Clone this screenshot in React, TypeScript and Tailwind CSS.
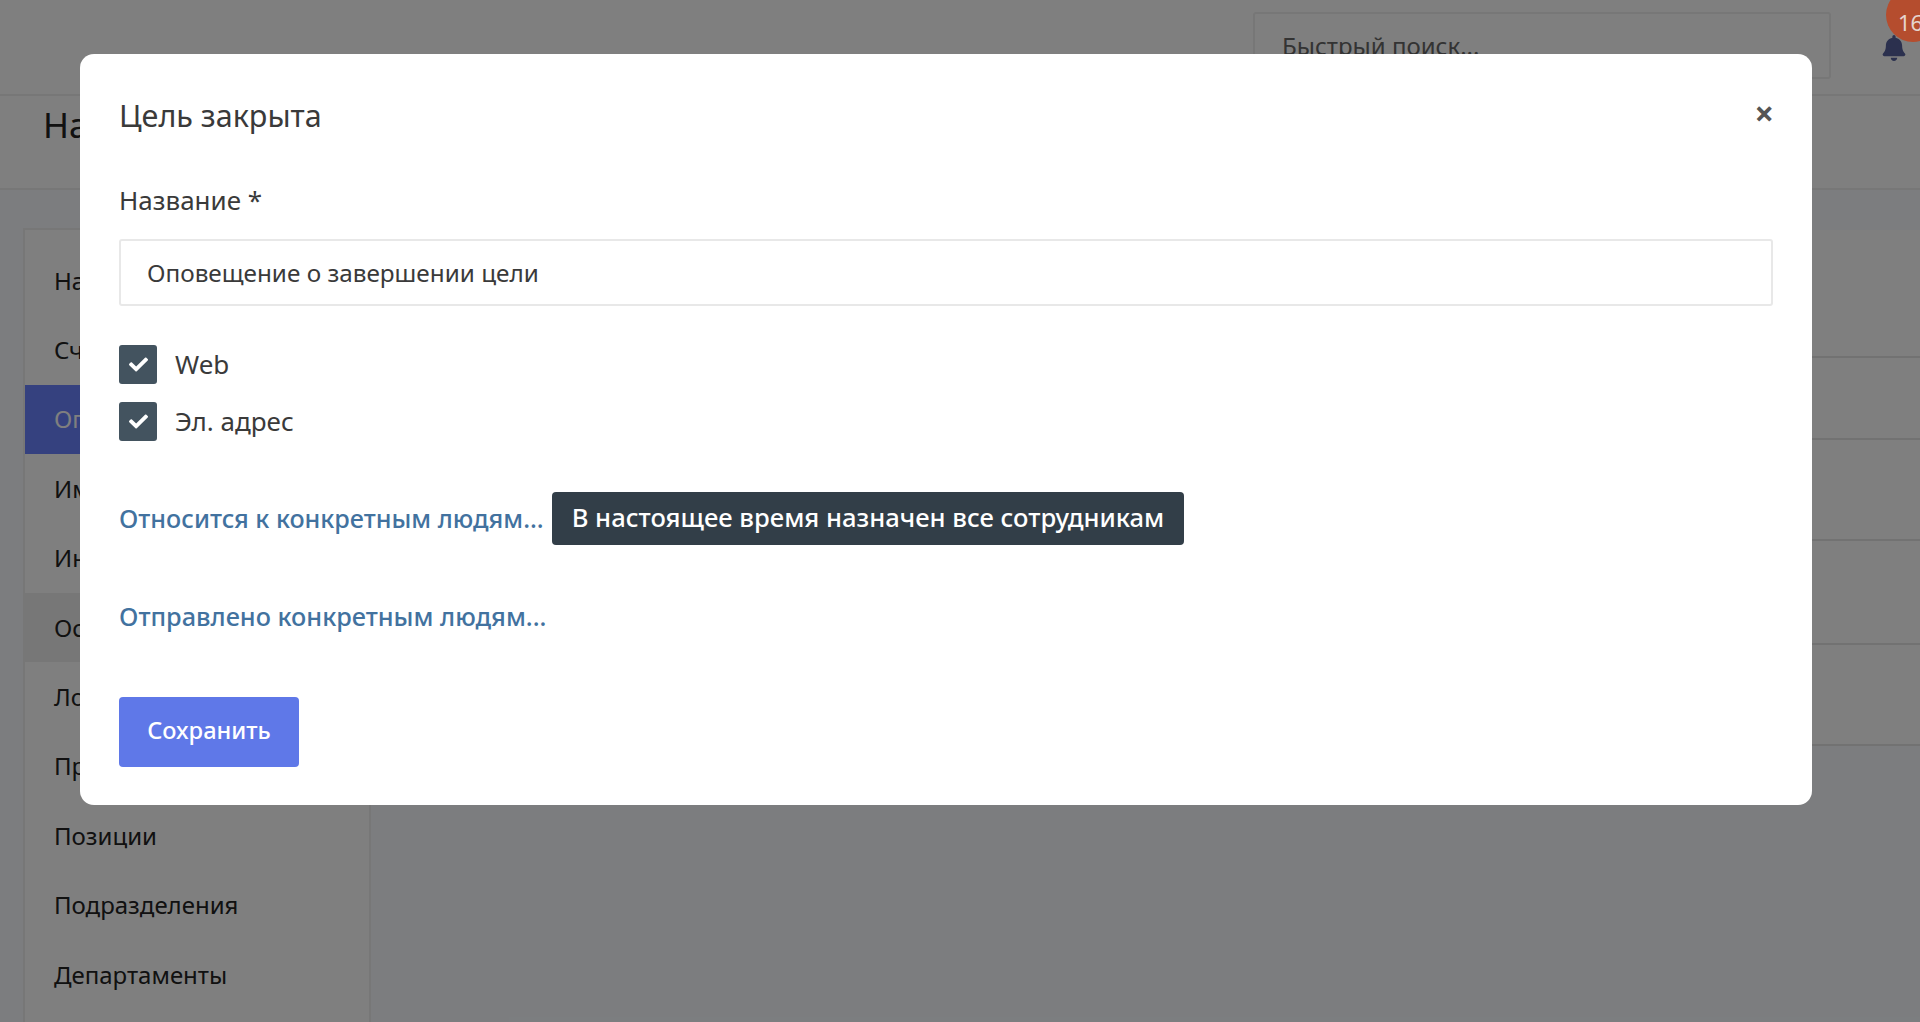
import { FaBell, FaCheck } from "react-icons/fa";

const menuItems = [
  "Настройки",
  "Счета",
  "Оповещения",
  "Импорт",
  "Интеграции",
  "Основные",
  "Локации",
  "Профили",
  "Позиции",
  "Подразделения",
  "Департаменты",
  "Роли",
];

const cardRows = ["h-[128px]", "h-[82px]", "h-[101px]", "h-[104px]", "h-[101px]"];

function Check({ label }: { label: string }) {
  return (
    <label className="flex items-center gap-[18px] h-[39px]">
      <span className="w-[38px] h-[39px] rounded-[3px] bg-[#43535f] flex items-center justify-center text-white">
        <FaCheck size={19} />
      </span>
      <span className="text-[26px] text-[#3a3a3a]">{label}</span>
    </label>
  );
}

export default function App() {
  return (
    <div
      className="relative h-[1022px] overflow-hidden bg-[#f8fbff] text-[#222]"
      style={{ fontFamily: '"Noto Sans", sans-serif' }}
    >
      <header className="h-[96px] bg-white border-b-2 border-[#eee] flex items-start justify-end pt-[12px]">
        <div className="w-[578px] h-[67px] border-2 border-[#eee] rounded-[3px] px-[27px] py-[14px] text-[24px] leading-[36px] text-[#666]">
          Быстрый поиск...
        </div>
        <div className="relative w-[89px] h-[60px] pl-[50px] pt-[23px] text-[#56619c]">
          <FaBell size={26} />
        </div>
      </header>
      <div className="h-[94px] bg-white border-b-2 border-[#eee] pl-[43px] pt-[4px] text-[35px] leading-[50px]">
        Настройки
      </div>
      <main className="flex pt-[40px] pl-[25px]">
        <nav className="w-[344px] h-[900px] pt-[16px] shrink-0 bg-white shadow-[0_0_0_2px_#eeeeee]">
          {menuItems.map((item, i) => (
            <div
              key={item}
              className={`h-[69.4px] flex items-center pl-[29px] text-[24px] ${
                i === 2 ? "bg-[#6a83ff] text-white" : i === 5 ? "bg-[#eeeeee]" : ""
              }`}
            >
              {item}
            </div>
          ))}
        </nav>
        <section className="flex-1 ml-[30px] self-start bg-white">
          {cardRows.map((row) => (
            <div key={row} className={`${row} border-b-2 border-[#e4e4e4]`} />
          ))}
        </section>
      </main>

      {/* overlay + modal */}
      <div className="absolute inset-0 bg-black/50" />
      <div className="absolute left-[1886px] top-[-12px] w-[54px] h-[54px] rounded-full bg-[#b54d2e] text-[#e6d5cf] text-[22px] pl-[12px] pt-[18px] leading-[32px]">
        16
      </div>
      <div className="absolute left-[80px] top-[54px] w-[1732px] h-[751px] bg-white rounded-[14px] px-[39px] pt-[39px] text-[#3a3a3a]">
        <div className="flex justify-between h-[44px]">
          <h2 className="text-[30.5px] leading-[44px]">Цель закрыта</h2>
          <span className="text-[34px] leading-[40px] font-bold text-[#555] -mr-[1px]">×</span>
        </div>
        <div className="mt-[48px] text-[26px] leading-[30px]">Название *</div>
        <div className="mt-[24px] h-[67px] pt-[1px] border-2 border-[#e8e8e8] rounded-[3px] pl-[26px] flex items-center text-[24.3px]">
          Оповещение о завершении цели
        </div>
        <div className="mt-[39px] flex flex-col gap-[18px]">
          <Check label="Web" />
          <Check label="Эл. адрес" />
        </div>
        <div className="mt-[51px] flex items-center h-[53px] font-medium text-[#42729f]">
          <a className="text-[25.2px]">Относится к конкретным людям...</a>
          <span className="ml-[8px] h-[53px] px-[20px] flex items-center rounded-[4px] bg-[#323e48] text-white text-[25.6px]">
            В настоящее время назначен все сотрудникам
          </span>
        </div>
        <div className="mt-[56px] text-[25.3px] font-medium leading-[30px] text-[#42729f]">
          <a>Отправлено конкретным людям...</a>
        </div>
        <button className="mt-[66px] w-[180px] h-[70px] pb-[3px] rounded-[4px] bg-[#5f78e8] text-white text-[23.6px] font-medium">
          Сохранить
        </button>
      </div>
    </div>
  );
}
